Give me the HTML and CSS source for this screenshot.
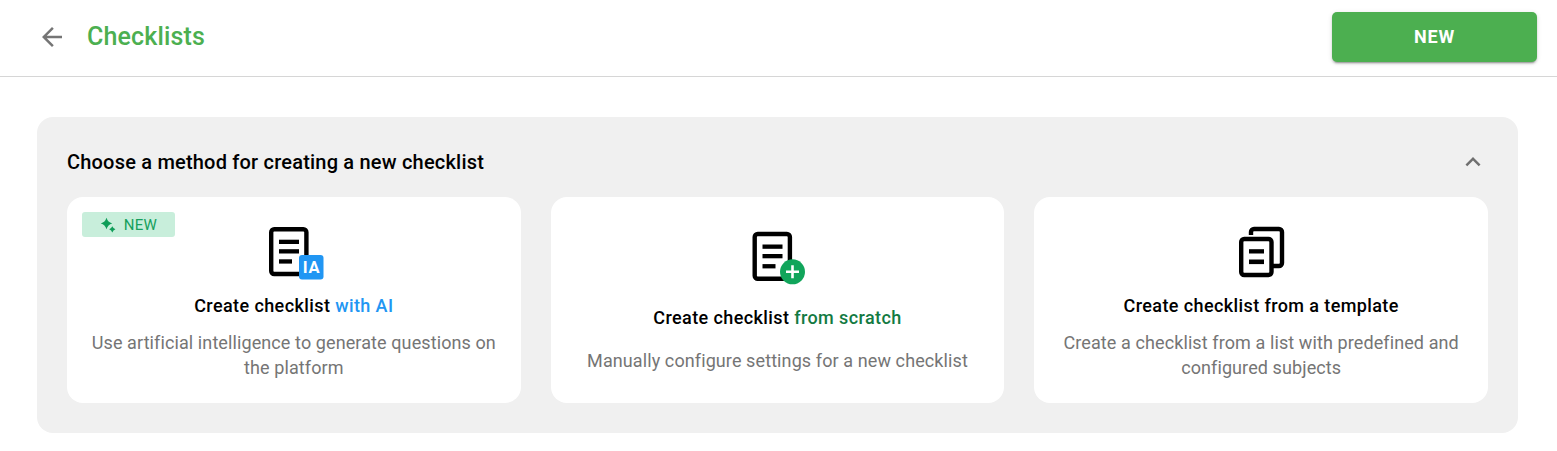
FILE: index.html
```html
<!DOCTYPE html>
<html lang="en">
<head>
<meta charset="utf-8">
<title>Checklists</title>
<link rel="stylesheet" href="styles.css">
</head>
<body>
<header class="topbar">
  <div class="topbar-left">
    <svg class="icon-back" viewBox="0 0 24 24"><path d="M20 11H7.83l5.59-5.59L12 4l-8 8 8 8 1.41-1.41L7.83 13H20v-2z"/></svg>
    <h1 class="page-title">Checklists</h1>
  </div>
  <button class="btn-new">NEW</button>
</header>
<main class="content">
  <section class="panel">
    <div class="panel-head">
      <h2 class="panel-title">Choose a method for creating a new checklist</h2>
      <svg class="icon-chevron" viewBox="0 0 24 24"><path d="M12 8l-6 6 1.41 1.41L12 10.83l4.59 4.58L18 14z"/></svg>
    </div>
    <div class="cards">
      <article class="card">
        <span class="badge">
          <svg class="icon-sparkle" viewBox="0 0 16 16"><path d="M6.500.8Q7.800 5.200 12.200 6.500 7.800 7.800 6.500 12.200 5.200 7.800.8 6.500 5.200 5.200 6.500.8z"/><path d="M12.300 9.200L13.500 11.100 15.400 12.300 13.500 13.500 12.300 15.400 11.100 13.500 9.200 12.300 11.100 11.100z"/></svg>
          NEW
        </span>
        <svg class="method-icon" viewBox="0 1 60 52">
          <rect class="doc" x="7.200" y="2.200" width="35.200" height="44.800" rx="3"/>
          <rect class="ink" x="15" y="12.700" width="20" height="4.300"/>
          <rect class="ink" x="15" y="22.200" width="20" height="4.300"/>
          <rect class="ink" x="15" y="32.300" width="13" height="4.300"/>
          <rect class="tag" x="35" y="28" width="24.500" height="24.500" rx="3"/>
          <text class="tag-text" x="47.500" y="46">IA</text>
        </svg>
        <h3 class="card-title">Create checklist <span class="hl-blue">with AI</span></h3>
        <p class="card-text">Use artificial intelligence to generate questions on the platform</p>
      </article>
      <article class="card">
        <svg class="method-icon" viewBox="0 1 60 52">
          <rect class="doc" x="7.700" y="1" width="35.200" height="44.800" rx="3"/>
          <rect class="ink" x="15.500" y="11.500" width="20" height="4.300"/>
          <rect class="ink" x="15.500" y="21" width="20" height="4.300"/>
          <rect class="ink" x="15.500" y="31.100" width="13" height="4.300"/>
          <circle class="plus-bg" cx="45.500" cy="38.800" r="12.500"/>
          <path class="plus" d="M45.500 32.300v13M39 38.800h13"/>
        </svg>
        <h3 class="card-title">Create checklist <span class="hl-green">from scratch</span></h3>
        <p class="card-text">Manually configure settings for a new checklist</p>
      </article>
      <article class="card">
        <svg class="method-icon" viewBox="0 1 60 52">
          <path class="doc" d="M20 8V5a3 3 0 0 1 3-3h25a3 3 0 0 1 3 3v31a3 3 0 0 1-3 3h-6"/>
          <rect class="doc" x="10.200" y="12" width="30.300" height="36" rx="3"/>
          <rect class="ink" x="18" y="22.200" width="15" height="4.300"/>
          <rect class="ink" x="18" y="32.500" width="15" height="4.600"/>
        </svg>
        <h3 class="card-title">Create checklist from a template</h3>
        <p class="card-text">Create a checklist from a list with predefined and configured subjects</p>
      </article>
    </div>
  </section>
</main>
</body>
</html>
```
FILE: styles.css
```css
* { box-sizing: border-box; }
html, body { margin: 0; background: #fff; }
body { font-family: Roboto, "Liberation Sans", sans-serif; overflow: hidden; }
.topbar {
  display: flex; align-items: center; justify-content: space-between;
  height: 77px; padding: 0 20px 3px 37px; border-bottom: 1px solid #d6d6d6;
}
.topbar-left { display: flex; align-items: center; gap: 20px; }
.icon-back { width: 30px; height: 30px; fill: #757575; display: block; }
.page-title { margin: 0; font-size: 25px; font-weight: 500; line-height: 32px; letter-spacing: .15px; color: #4caf50; }
.btn-new {
  width: 205px; height: 50px; border: 0; border-radius: 5px; background: #4caf50; color: #fff;
  font-family: inherit; font-size: 18px; font-weight: 700; letter-spacing: .8px;
  box-shadow: 0 3px 1px -2px rgba(0,0,0,.2), 0 2px 2px 0 rgba(0,0,0,.14), 0 1px 5px 0 rgba(0,0,0,.12);
}
.content { padding: 40px 39px 18px 37px; }
.panel { background: #f0f0f0; border-radius: 16px; padding: 30px; }
.panel-head { display: flex; align-items: center; justify-content: space-between; height: 30px; margin-bottom: 20px; }
.panel-title { margin: 0; font-size: 20px; font-weight: 500; line-height: 30px; letter-spacing: .2px; color: #000; }
.icon-chevron { width: 30px; height: 30px; fill: #6f6f6f; display: block; }
.cards { display: grid; grid-template-columns: repeat(3, 1fr); gap: 30px; }
.card {
  position: relative; height: 206px; background: #fff; border-radius: 16px;
  padding: 17.500px 22px 10.500px; display: flex; flex-direction: column; align-items: center;
  justify-content: space-evenly; text-align: center;
}
.method-icon { width: 60px; height: 52px; display: block; overflow: visible; }
.doc { fill: none; stroke: #000; stroke-width: 4.400; }
.ink { fill: #000; }
.tag { fill: #2196f3; }
.tag-text { fill: #fff; font-family: Roboto, sans-serif; font-size: 16.500px; font-weight: 700; letter-spacing: .6px; text-anchor: middle; }
.plus-bg { fill: #11a55b; }
.plus { stroke: #fff; stroke-width: 2.600; fill: none; }
.card-title { margin: 0; font-size: 18px; font-weight: 500; line-height: 24px; letter-spacing: .4px; color: #000; position: relative; top: 1px; }
.hl-blue { color: #2196f3; }
.hl-green { color: #137a42; }
.card-text { margin: 0; font-size: 18px; line-height: 25px; letter-spacing: .1px; color: #757575; }
.badge {
  position: absolute; left: 15px; top: 15px; width: 93px; height: 25px; border-radius: 3px;
  background: #c8eedb; color: #16a05d; font-size: 15px; letter-spacing: .3px;
  display: flex; align-items: center; justify-content: center; gap: 8px;
}
.icon-sparkle { width: 16px; height: 16px; fill: #0f9d58; display: block; }
```
